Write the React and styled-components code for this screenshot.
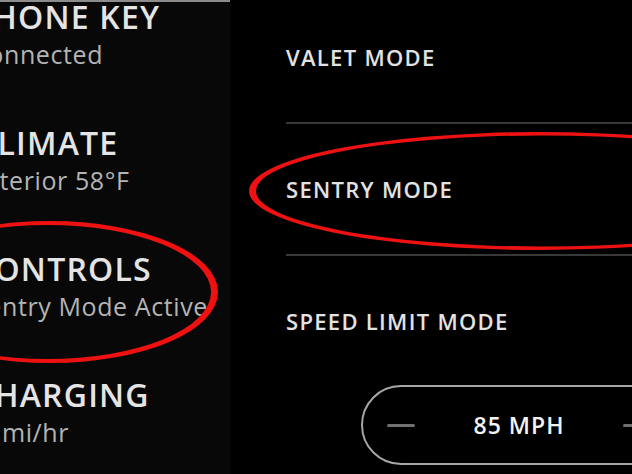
import React from "react";
import styled, { createGlobalStyle } from "styled-components";

const Global = createGlobalStyle`
  html, body { margin: 0; padding: 0; background: #000; }
  body { font-family: "Open Sans", "Liberation Sans", sans-serif; }
`;

const Screen = styled.div`
  position: relative;
  width: 632px;
  height: 474px;
  overflow: hidden;
  background: #000;
  display: flex;
`;

const Sidebar = styled.aside`
  width: 230px;
  flex: none;
  background: #080808;
  border-top: 2px solid #8c8c8c;
  box-sizing: border-box;
  overflow: hidden;
  display: flex;
  flex-direction: column;
  gap: 56px;
`;

const SideItem = styled.div`
  display: flex;
  flex-direction: column;
  gap: 4px;
  margin-left: ${(p) => p.$shift}px;
  white-space: nowrap;
  &:first-child { margin-top: -3px; }
`;

const SideTitle = styled.div`
  font-size: 32px;
  line-height: 36px;
  font-weight: 600;
  color: #e4e4e4;
  letter-spacing: 1.2px;
`;

const SideSub = styled.div`
  font-size: 25px;
  line-height: 30px;
  font-weight: 400;
  color: #b4b4b4;
  letter-spacing: 0.6px;
  margin-left: ${(p) => p.$shift || 0}px;
`;

const Main = styled.main`
  flex: 1;
  min-width: 0;
  padding-left: 56px;
  margin-top: -8px;
  display: flex;
  flex-direction: column;
`;

const Row = styled.div`
  height: 130px;
  display: flex;
  align-items: center;
  border-bottom: ${(p) => (p.$divider ? "2px solid #383838" : "none")};
  flex: none;
`;

const RowLabel = styled.span`
  font-size: 22px;
  font-weight: 600;
  color: #e2e2e2;
  letter-spacing: 1.3px;
  white-space: nowrap;
`;

const Stepper = styled.div`
  margin-left: 75px;
  width: 316px;
  height: 80px;
  box-sizing: border-box;
  border: 2px solid #a6a6a6;
  border-radius: 40px;
  display: flex;
  align-items: center;
  justify-content: space-between;
  padding: 0 24px;
  flex: none;
  margin-top: -1px;
`;

const Dash = styled.span`
  width: 28px;
  height: 3px;
  border-radius: 2px;
  background: #707070;
`;

const StepValue = styled.span`
  font-size: 23px;
  font-weight: 600;
  color: #f2f2f2;
  letter-spacing: 1px;
`;

const Marks = styled.svg`
  position: absolute;
  inset: 0;
  pointer-events: none;
`;

const ring = (o, i) =>
  `M${o[0] - o[2]},${o[1]} a${o[2]},${o[3]} 0 1,0 ${2 * o[2]},0 a${o[2]},${o[3]} 0 1,0 ${-2 * o[2]},0 Z ` +
  `M${i[0] - i[2]},${i[1]} a${i[2]},${i[3]} 0 1,0 ${2 * i[2]},0 a${i[2]},${i[3]} 0 1,0 ${-2 * i[2]},0 Z`;

const items = [
  { title: "PHONE KEY", sub: "Connected", shift: -28 },
  { title: "CLIMATE", sub: "Interior 58°F", shift: -24 },
  { title: "CONTROLS", sub: "Sentry Mode Active", shift: -27 },
  { title: "CHARGING", sub: "85 mi/hr", shift: -27, subShift: -8 },
];

export default function App() {
  return (
    <>
      <Global />
      <Screen>
        <Sidebar>
          {items.map((it) => (
            <SideItem key={it.title} $shift={it.shift}>
              <SideTitle>{it.title}</SideTitle>
              <SideSub $shift={it.subShift}>{it.sub}</SideSub>
            </SideItem>
          ))}
        </Sidebar>
        <Main>
          <Row $divider>
            <RowLabel>VALET MODE</RowLabel>
          </Row>
          <Row $divider>
            <RowLabel>SENTRY MODE</RowLabel>
          </Row>
          <Row>
            <RowLabel>SPEED LIMIT MODE</RowLabel>
          </Row>
          <Stepper>
            <Dash />
            <StepValue>85 MPH</StepValue>
            <Dash />
          </Stepper>
        </Main>
        <Marks width="632" height="474" viewBox="0 0 632 474">
          <path
            fill="#ee1111"
            fillRule="evenodd"
            d={ring([50, 292, 168, 71], [47, 292, 164, 67])}
          />
          <path
            fill="#ee1111"
            fillRule="evenodd"
            d={ring([540, 191, 291, 59], [542, 191, 286, 55.5])}
          />
        </Marks>
      </Screen>
    </>
  );
}
